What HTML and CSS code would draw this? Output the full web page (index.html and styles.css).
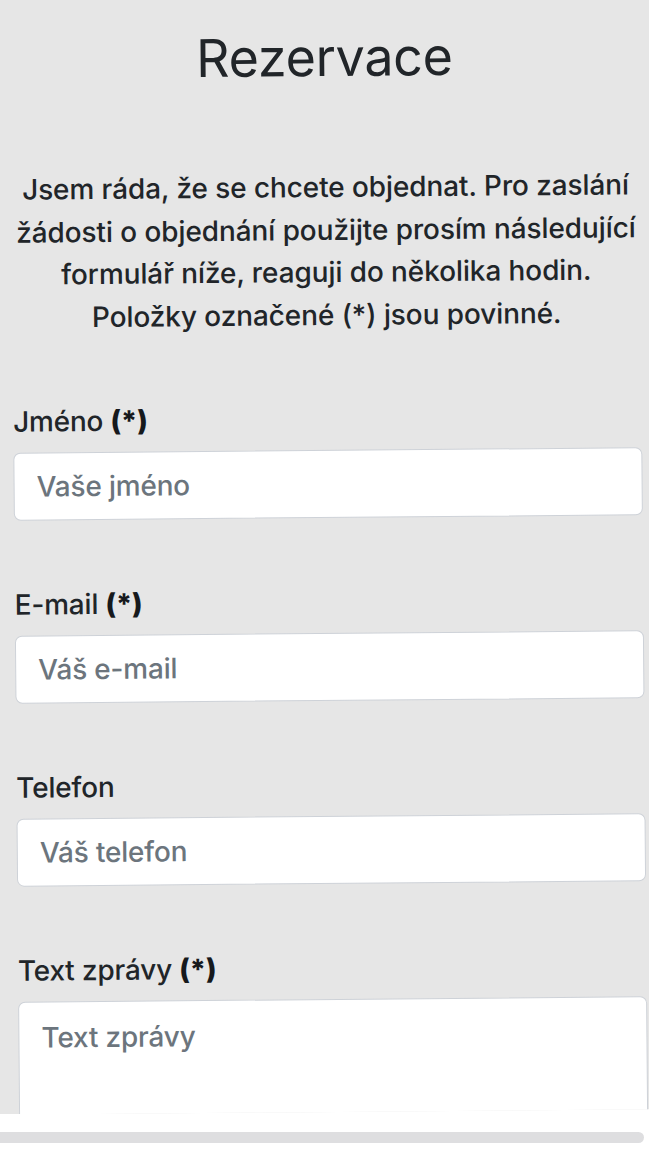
FILE: index.html
```html
<!DOCTYPE html>
<html lang="cs">
<head>
<meta charset="utf-8">
<title>Rezervace</title>
<link rel="stylesheet" href="styles.css">
</head>
<body>
<div class="frame">
  <div class="viewport">
    <main class="page">
      <h1 class="title">Rezervace</h1>
      <p class="intro">Jsem ráda, že se chcete objednat. Pro zaslání<br>žádosti o objednání použijte prosím následující<br>formulář níže, reaguji do několika hodin.<br>Položky označené (*) jsou povinné.</p>
      <form class="form">
        <div class="field">
          <label class="label" for="jmeno">Jméno <b>(*)</b></label>
          <input class="control" id="jmeno" type="text" placeholder="Vaše jméno">
        </div>
        <div class="field">
          <label class="label" for="email">E-mail <b>(*)</b></label>
          <input class="control" id="email" type="email" placeholder="Váš e-mail">
        </div>
        <div class="field">
          <label class="label" for="telefon">Telefon</label>
          <input class="control" id="telefon" type="tel" placeholder="Váš telefon">
        </div>
        <div class="field">
          <label class="label" for="zprava">Text zprávy <b>(*)</b></label>
          <textarea class="control area" id="zprava" placeholder="Text zprávy"></textarea>
        </div>
      </form>
    </main>
  </div>
</div>
<div class="scrollbar"></div>
</body>
</html>
```

FILE: styles.css
```css
html, body {
  margin: 0;
  padding: 0;
  overflow: hidden;
  background: #ffffff;
}

body {
  font-family: Inter, "Noto Sans", "Liberation Sans", sans-serif;
  color: #212529;
}

.frame {
  width: 649px;
  height: 1114px;
  overflow: hidden;
}

.viewport {
  width: 709px;
  height: 1142px;
  margin: -30px 0 0 -30px;
  padding: 30px 30px 0;
  box-sizing: border-box;
  background: #e6e6e6;
  overflow: hidden;
  transform: rotate(-0.5deg);
  transform-origin: 354px 560px;
}

.page {
  padding: 0 6px 0 14px;
}

.title {
  margin: 26px 0 0;
  font-size: 52px;
  line-height: 63px;
  font-weight: 400;
  text-align: center;
  color: #212529;
  letter-spacing: -0.3px;
}

.intro {
  margin: 77px 0 0;
  font-size: 28px;
  line-height: 42.5px;
  font-weight: 500;
  text-align: center;
  white-space: nowrap;
  letter-spacing: -0.1px;
}

.form {
  display: flex;
  flex-direction: column;
  gap: 65px;
  margin-top: 64px;
}

.field {
  display: flex;
  flex-direction: column;
  gap: 12px;
}

.label {
  font-size: 28px;
  line-height: 38px;
  font-weight: 500;
  letter-spacing: -0.2px;
}

.label b {
  font-weight: 800;
  color: #16191c;
}

.control {
  display: block;
  box-sizing: border-box;
  width: 100%;
  height: 68px;
  margin: 0;
  padding: 0 22px;
  border: 1.5px solid #ced2d8;
  border-radius: 7px;
  background: #ffffff;
  font-family: inherit;
  font-size: 28px;
  font-weight: 500;
  color: #212529;
  letter-spacing: -0.2px;
  outline: none;
}

.control::placeholder {
  color: #6c757d;
  opacity: 1;
}

.area {
  height: 160px;
  padding-top: 15px;
  line-height: 40px;
  resize: none;
}

.scrollbar {
  width: 644px;
  height: 11px;
  margin-top: 18px;
  background: #dedee0;
  border-radius: 0 6px 6px 0;
}
```
